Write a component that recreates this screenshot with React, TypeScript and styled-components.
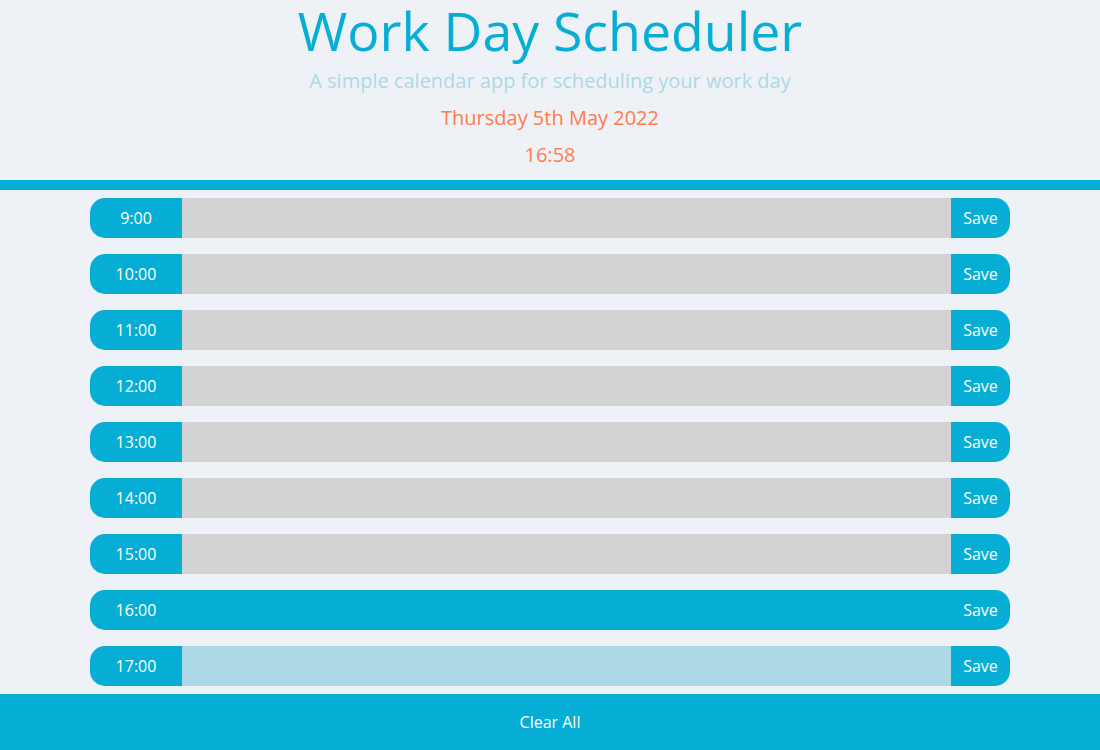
import React from "react";
import styled, { createGlobalStyle } from "styled-components";

const BLUE = "#06aed5";

const Global = createGlobalStyle`
  html, body { margin: 0; padding: 0; background: #eef2f6; }
  body { font-family: "Open Sans", "Liberation Sans", sans-serif; }
  * { box-sizing: border-box; }
`;

const Page = styled.div`
  display: flex;
  flex-direction: column;
  min-height: 750px;
`;

const Header = styled.header`
  display: flex;
  flex-direction: column;
  align-items: center;
  padding-bottom: 7px;
  border-bottom: 10px solid ${BLUE};
`;

const Title = styled.h1`
  margin: 0;
  font-size: 53.6px;
  line-height: 61px;
  font-weight: 400;
  color: ${BLUE};
`;

const Subtitle = styled.p`
  margin: 2px 0 0;
  font-size: 20px;
  line-height: 36px;
  color: #add8e6;
`;

const Stamp = styled.p`
  margin: 1px 0 0;
  font-size: 20px;
  line-height: 36px;
  color: #ff7c4c;
`;

const Rows = styled.main`
  display: flex;
  flex-direction: column;
  gap: 16px;
  padding: 8px 90px 8px;
`;

type Status = "past" | "present" | "future";

const bg: Record<Status, string> = {
  past: "#d3d3d3",
  present: BLUE,
  future: "#add8e6",
};

const Row = styled.div`
  display: flex;
  height: 40px;
  border-radius: 15px;
  overflow: hidden;
`;

const Hour = styled.div`
  width: 92px;
  flex: none;
  display: flex;
  align-items: center;
  justify-content: center;
  background: ${BLUE};
  color: #fff;
  font-size: 16px;
`;

const Entry = styled.textarea<{ $status: Status }>`
  flex: 1;
  border: none;
  outline: none;
  resize: none;
  margin: 0;
  padding: 8px;
  font-family: inherit;
  font-size: 16px;
  background: ${(p) => bg[p.$status]};
`;

const SaveBtn = styled.button`
  width: 59px;
  flex: none;
  border: none;
  margin: 0;
  padding: 0;
  background: ${BLUE};
  color: #fff;
  font-family: inherit;
  font-size: 16px;
  cursor: pointer;
`;

const Footer = styled.button`
  margin-top: auto;
  height: 56px;
  width: 100%;
  border: none;
  background: ${BLUE};
  color: #fff;
  font-family: inherit;
  font-size: 16px;
`;

const hours = [9, 10, 11, 12, 13, 14, 15, 16, 17];
const statusOf = (h: number): Status => (h < 16 ? "past" : h === 16 ? "present" : "future");

export default function App() {
  return (
    <Page>
      <Global />
      <Header>
        <Title>Work Day Scheduler</Title>
        <Subtitle>A simple calendar app for scheduling your work day</Subtitle>
        <Stamp>Thursday 5th May 2022</Stamp>
        <Stamp>16:58</Stamp>
      </Header>
      <Rows>
        {hours.map((h) => (
          <Row key={h}>
            <Hour>{h}:00</Hour>
            <Entry $status={statusOf(h)} />
            <SaveBtn>Save</SaveBtn>
          </Row>
        ))}
      </Rows>
      <Footer>Clear All</Footer>
    </Page>
  );
}
